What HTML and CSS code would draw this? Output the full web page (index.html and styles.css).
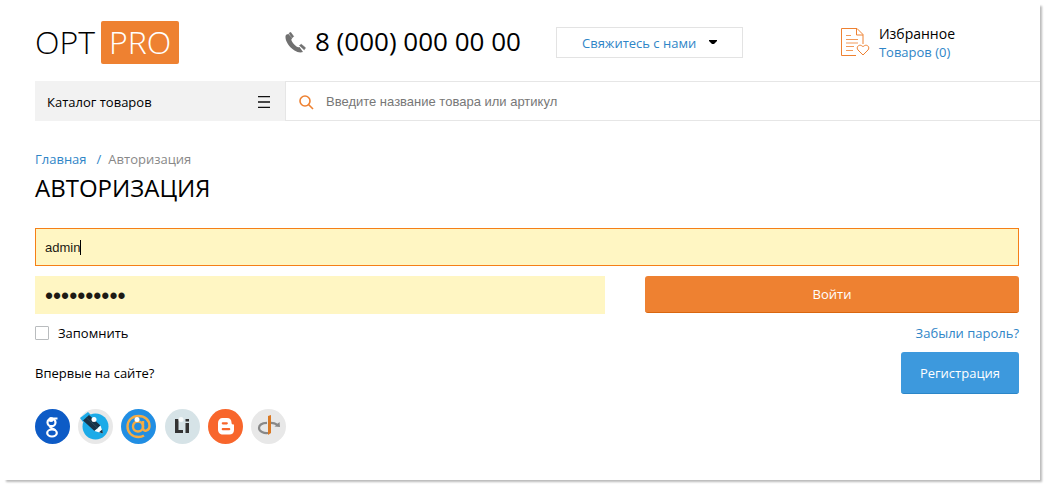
FILE: index.html
```html
<!DOCTYPE html>
<html lang="ru">
<head>
<meta charset="utf-8">
<title>Авторизация</title>
<link rel="stylesheet" href="styles.css">
</head>
<body>
<div class="page">
  <header class="header">
    <a class="logo" href="#"><span class="logo-left">OPT</span><span class="logo-right">PRO</span></a>
    <div class="phone">
      <svg width="21" height="21" viewBox="0 0 21 21"><path d="M.5 4C0 9 4 15 9.500 18.500c3 2 6 2.300 8.500 1.500l-3.500-5c-1 .7-2 .3-3-.5C9 12.500 7.300 10.500 6.500 8.500c-.3-1 0-1.700.8-2.200L3.500 2C2 2 .8 2.800.5 4z" fill="#707070"/><path d="M4 1.300L5.700.3l3 4.200-1.700 1.200zM14.500 13.500l1.800-1.200 4.200 3.500-1.300 2z" fill="#707070" stroke="#707070" stroke-width=".6"/></svg>
      <span>8 (000) 000 00 00</span>
    </div>
    <button class="contact" type="button">Свяжитесь с нами<svg width="8" height="5" viewBox="0 0 8 5"><path d="M0 0h8v1L5 4H3L0 1z" fill="#000"/></svg></button>
    <div class="favorites">
      <svg width="29" height="29" viewBox="0 0 29 29" fill="none" stroke="#ee8131"><path d="M15 27.500H.5V.5H16l6 6V16M15.500.5V7H22"/><path d="M5 7.500h5M5 11.500h12M5 15h12M5 18.500h8M5 22.500h7" stroke-opacity=".8"/><path d="M22 27l-5-5c-2.500-3 1.500-7 5-3.200 3.500-3.800 7.500.2 5 3.200z"/></svg>
      <div class="favorites-text"><span>Избранное</span><a href="#">Товаров (0)</a></div>
    </div>
  </header>
  <div class="toolbar">
    <button class="catalog" type="button">Каталог товаров<svg width="12" height="12" viewBox="0 0 12 12"><path d="M0 .5h12M0 6h12M0 11.500h12" stroke="#111" stroke-width="1.400"/></svg></button>
    <label class="search">
      <svg width="15" height="15" viewBox="0 0 15 15" fill="none" stroke="#ee8131" stroke-width="1.600"><circle cx="6" cy="6" r="5"/><path d="M9.500 9.500l4.500 4.500"/></svg>
      <input type="search" aria-label="Поиск" placeholder="Введите название товара или артикул">
    </label>
  </div>
  <main class="content">
    <nav class="crumbs"><a href="#">Главная</a><span class="slash">/</span><span>Авторизация</span></nav>
    <h1>АВТОРИЗАЦИЯ</h1>
    <form class="form">
      <div class="login-field">
        <input class="field field-active" type="text" aria-label="Логин" value="admin">
        <span class="caret"></span>
      </div>
      <div class="row">
        <input class="field password" type="password" aria-label="Пароль" value="0123456789">
        <button class="submit" type="button">Войти</button>
      </div>
      <div class="options">
        <label class="remember"><input type="checkbox">Запомнить</label>
        <a href="#">Забыли пароль?</a>
      </div>
      <div class="signup">
        <span>Впервые на сайте?</span>
        <a class="register" href="#">Регистрация</a>
      </div>
    </form>
    <div class="socials">
      <a href="#" aria-label="Google"><svg viewBox="0 0 35 35"><circle cx="17.500" cy="17.500" r="17.500" fill="#0d5bc6"/><g fill="none" stroke="#fff"><ellipse cx="16.500" cy="13.500" rx="4" ry="3.700" stroke-width="2.200"/><ellipse cx="17" cy="24" rx="4.800" ry="3.500" stroke-width="2.200"/><path d="M15.500 17c-2 2.500 4 2 5 4.500M17 9.600h5.500" stroke-width="2"/></g><circle cx="16" cy="10.500" r="2.500" fill="#fff"/></svg></a>
      <a href="#" aria-label="LiveJournal"><svg viewBox="0 0 35 35"><circle cx="17.500" cy="17.500" r="17.500" fill="#e8e8e8"/><circle cx="17.500" cy="17.500" r="13" fill="#1cabe8"/><path d="M2 9l8-6 3 3-8 7z" fill="#1cabe8"/><path d="M5 11.500L11 6l11.500 10.500-6 5.500z" fill="#1a3347"/><path d="M16.500 22l6-5.500L25 24.500z" fill="#fff"/><path d="M21 23.200l3.200-2.700.8 4z" fill="#1a3347"/><path d="M8.500 9l11 10" stroke="#294b5e"/><circle cx="16" cy="10.500" r="2.500" fill="#fff"/></svg></a>
      <a href="#" aria-label="Mail.ru"><svg viewBox="0 0 35 35"><circle cx="17.500" cy="17.500" r="17.500" fill="#218ee3"/><g fill="none" stroke="#f4ac45" stroke-width="2.400"><circle cx="17" cy="17.500" r="5"/><path d="M22 12v7c0 4.500 6.500 3 6.500-2 0-6-4.500-10-11-10S6.500 11.500 6.500 17.500 11 28 17.500 28c2.500 0 4-.5 5.500-1.500"/></g><circle cx="16" cy="10.500" r="2.500" fill="#fff"/></svg></a>
      <a href="#" aria-label="Liveinternet"><svg viewBox="0 0 35 35"><circle cx="17.500" cy="17.500" r="17.500" fill="#d6e3e7"/><path d="M10 10h3.500v11H18v3h-8zM20.500 14H24v10h-3.500zM20.500 10H24v2.500h-3.500z" fill="#333"/><circle cx="16" cy="10.500" r="2.500" fill="#fff" fill-opacity=".8"/></svg></a>
      <a href="#" aria-label="Blogger"><svg viewBox="0 0 35 35"><circle cx="17.500" cy="17.500" r="17.500" fill="#f8662c"/><path d="M14.500 9H19c3 0 4.500 2 4.500 4.500 0 1.500.5 2 2.500 2v5.500c0 3-2 4.500-4.500 4.500H15c-3 0-5-2-5-5v-6.500c0-3 2-5 4.500-5z" fill="#fff"/><path d="M14.800 14.300h4M14.800 20.200h6.400" stroke="#f8662c" stroke-width="2.200" stroke-linecap="round"/></svg></a>
      <a href="#" aria-label="OpenID"><svg viewBox="0 0 35 35"><circle cx="17.500" cy="17.500" r="17.500" fill="#e8e8e8"/><path d="M17 24c-4 .5-9-1.500-9-5 0-3 3-5 8-5.200M20 13.800c3 0 5 1 6.500 2" fill="none" stroke="#888" stroke-width="2.200"/><path d="M23.500 17.500l5.500.5-.5-5z" fill="#888"/><path d="M17 7l3-1v18l-3 2z" fill="#d97824"/></svg></a>
    </div>
  </main>
</div>
</body>
</html>
```
FILE: styles.css
```css
* { box-sizing: border-box; }
body {
  margin: 0;
  font: 13px/18px "Open Sans", "Noto Sans", sans-serif;
  color: #000;
  background: #fff;
}
button, input { font: inherit; margin: 0; }
a { color: #2f85c7; text-decoration: none; }
svg { flex: none; display: block; }

.page {
  margin: 0 5px 5px 0;
  padding-bottom: 36px;
  background: #fff;
  box-shadow: 4px 4px 2px -2px #bbb;
}
.header {
  display: flex;
  align-items: center;
  padding: 21px 21px 17px 35px;
}
.logo {
  display: flex;
  align-items: center;
  gap: 6px;
  width: 250px;
  font-size: 32px;
  font-weight: 300;
  line-height: 41px;
}
.logo-left { padding-bottom: 2px; color: #000; }
.logo-right { padding: 0 8px 2px; border-radius: 2px; background: #ee8131; color: #fff; }
.phone {
  display: flex;
  align-items: center;
  gap: 9px;
  width: 271px;
  font-size: 26px;
  line-height: 39px;
}
.phone span { padding-bottom: 3px; }
.contact {
  display: flex;
  align-items: center;
  gap: 13px;
  height: 31px;
  padding: 0 25px;
  border: 1px solid #e3e3e3;
  background: #fff;
  color: #2f85c7;
}
.favorites {
  display: flex;
  align-items: center;
  gap: 9px;
  margin-left: auto;
  margin-right: 64px;
}
.favorites-text { display: flex; flex-direction: column; }
.favorites-text span { font-size: 14px; }

.toolbar { display: flex; height: 40px; margin-left: 35px; }
.catalog {
  display: flex;
  align-items: center;
  justify-content: space-between;
  width: 250px;
  padding: 2px 15px 0 12px;
  border: 0;
  background: #f2f2f2;
  color: #000;
}
.search {
  flex: 1;
  display: flex;
  align-items: center;
  gap: 12px;
  padding: 2px 0 0 13px;
  border: 1px solid #e6e6e6;
  border-right: 0;
}
.search input {
  flex: 1;
  padding: 0;
  border: 0;
  outline: 0;
  background: none;
  font-family: "Liberation Sans", Arial, sans-serif;
}
.search input::placeholder { color: #777; opacity: 1; }

.content { padding: 29px 21px 0 35px; }
.crumbs { display: flex; color: #888; }
.slash { margin: 0 7px 0 10px; color: #2f85c7; }
h1 { margin: 3px 0 24px; font-size: 24px; line-height: 33px; font-weight: 400; }
.login-field { position: relative; margin-bottom: 10px; }
.field {
  display: block;
  width: 100%;
  height: 38px;
  padding: 0 9px;
  border: 1px solid #fff6c3;
  border-radius: 0;
  outline: 0;
  background: #fff6c3;
  color: #1d1a14;
  font-family: "Liberation Sans", Arial, sans-serif;
}
.field-active { border-color: #f57f17; }
.password { padding-top: 2px; font-size: 23px; }
.caret { position: absolute; left: 45px; top: 12px; width: 1px; height: 15px; background: #000; }
.row { display: grid; grid-template-columns: 570fr 374fr; gap: 40px; }
.submit {
  height: 37px;
  border: 0;
  border-bottom: 1px solid #d9660f;
  border-radius: 3px;
  background: #ee8131;
  color: #fff;
}
.options, .signup { display: flex; justify-content: space-between; align-items: center; }
.options { margin: 10px 0; }
.remember { display: flex; align-items: center; gap: 9px; }
.remember input {
  appearance: none;
  width: 14px;
  height: 14px;
  border: 1px solid #b9bcbe;
  border-radius: 1px;
  background: #fff;
}
.register {
  padding: 12px 19px 11px;
  border-bottom: 1px solid #2b86c8;
  border-radius: 3px;
  background: #3d99dd;
  color: #fff;
}
.socials { display: flex; justify-content: space-between; max-width: 251px; margin-top: 15px; }
.socials a { width: 35px; height: 35px; }
```
